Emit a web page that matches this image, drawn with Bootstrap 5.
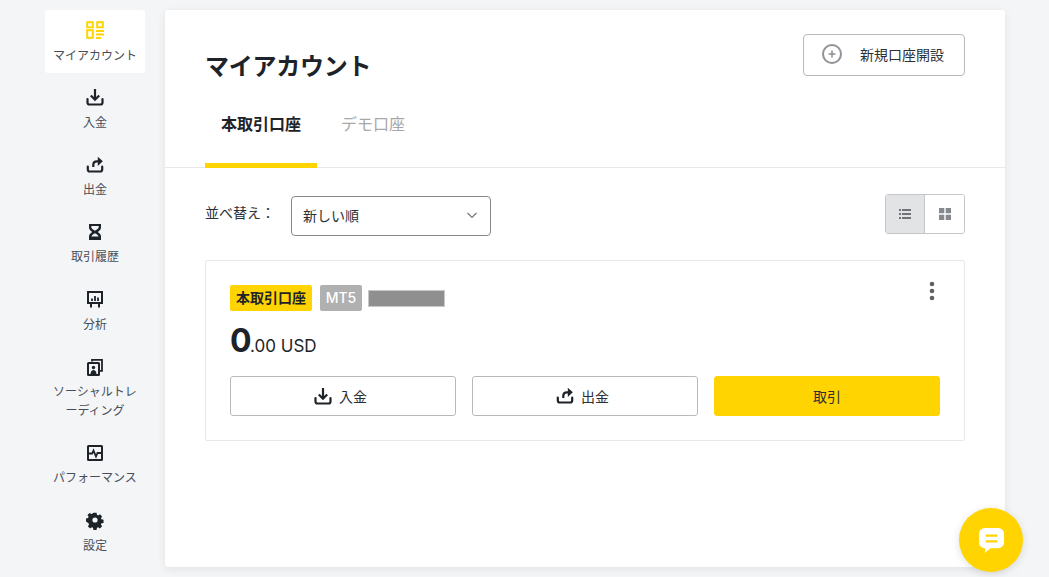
<!DOCTYPE html>
<html lang="ja">
<head>
<meta charset="utf-8">
<title>マイアカウント</title>
<link href="https://cdn.jsdelivr.net/npm/bootstrap@5.3.0/dist/css/bootstrap.min.css" rel="stylesheet">
<style>
html,body{height:577px;overflow:hidden}
body{background:#f3f5f7;font-family:Inter,"Noto Sans CJK JP",sans-serif;color:#2b2f36;padding:10px 44px 10px 45px}
.shell{gap:20px;height:557px}
.side{width:100px;flex:none;gap:4px}
.side-item{display:block;padding:10px 7px 8.83px;text-align:center;font-size:12px;line-height:19px;color:#474d57;text-decoration:none;border-radius:3px}
.side-item.on{background:#fff}
.side-item svg{display:block;margin:0 auto 5.5px;width:20px;height:20px}
.panel{width:840px;flex:none;background:#fff;border-radius:3px;box-shadow:0 2px 8px rgba(0,0,0,.08)}
.head{padding:24px 40px 0;border-bottom:1px solid #e6e8ea;height:158px}
.page-title{font-size:24px;font-weight:700;line-height:32px;margin:17px 0 0;color:#1e2329;letter-spacing:-.25px}
.new-btn{width:162px;height:42px;border:1px solid #b7b9bc;border-radius:4px;background:#fff;font-size:14px;color:#2b2f36;padding:0 20px 2px 18px}
.tabs-row{position:absolute;left:40px;bottom:-1px}
.head-wrap{position:relative}
.tab-item{font-size:16px;line-height:24px;padding:0 16px 27px;color:#a8a8a8;border-bottom:5px solid transparent;margin-right:8px}
.tab-item.on{font-weight:700;color:#1e2329;border-bottom-color:#ffd400}
.body-area{padding:26px 40px 0}
.sort-label{font-size:14px;line-height:20px;color:#2b2f36;width:86px;margin-top:9px}
.sort-box{width:200px;height:40px;border:1px solid #85888d;border-radius:4px;font-size:14px;padding:0 11px 2px;margin-top:2px;color:#2b2f36}
.view-switch{width:80px;height:40px;border:1px solid #c4c6c9;border-radius:3px;overflow:hidden}
.view-cell{width:50%;background:#fff}
.view-cell.on{background:#e2e3e5;border-right:1px solid #c4c6c9}
.acct{border:1px solid #e6e8ea;border-radius:2px;padding:24px;margin-top:24px;height:181px;position:relative}
.tag-real{background:#ffd400;color:#1e2329;font-weight:700;font-size:14px;line-height:26px;padding:0 6px;border-radius:2px;width:82px;text-align:center}
.tag-mt{background:#b0b0b0;color:#fff;font-weight:500;font-size:14px;line-height:26px;border-radius:2px;width:42px;text-align:center;margin-left:8px}
.tag-mask{width:77px;height:17px;background:#8f8f8f;border:1px solid #c8c8c8;margin-left:6px}
.dots{position:absolute;right:29px;top:20px;width:6px;height:20px}
.amount{margin-top:8px;line-height:44px;height:44px;color:#1e2329;font-size:17px}
.amount b{font-size:32px;font-weight:700;letter-spacing:-1.5px}
.acts{gap:16px;margin-top:13px}
.act{flex:0 0 226px;height:40px;border:1px solid #b7b9bc;border-radius:3px;background:#fff;font-size:14px;color:#2b2f36;gap:6px;padding:0 6px 0 0}
.act svg{width:20px;height:20px}
.act.main{background:#ffd400;border-color:#ffd400;padding:0}
.chat{position:absolute;left:959px;top:508px;width:64px;height:64px;border-radius:50%;background:#ffd400;box-shadow:0 2px 8px rgba(0,0,0,.12)}
</style>
</head>
<body>
<div class="d-flex shell">
  <nav class="side d-flex flex-column">
    <a class="side-item on" href="#"><svg viewBox="0 0 20 20" fill="none" stroke="#ffd400"><rect x="2.2" y="2.2" width="5.6" height="5.1" stroke-width="2"/><rect x="12.2" y="2.2" width="5.6" height="5.1" stroke-width="2"/><rect x="2.2" y="10.2" width="5.6" height="7.6" stroke-width="2"/><path d="M11 11h8M11 14.5h8M11 18h5" stroke-width="1.8"/></svg>マイアカウント</a>
    <a class="side-item" href="#"><svg viewBox="0 0 20 20" fill="none" stroke="#1e2329"><path d="M10 2v10M5.800 8.500 10 12.700l4.200-4.200" stroke-width="2.200"/><path d="M2.500 12v3.500a2 2 0 0 0 2 2h11a2 2 0 0 0 2-2V12" stroke-linecap="round" stroke-width="2.200"/></svg>入金</a>
    <a class="side-item" href="#"><svg viewBox="0 0 20 20" fill="none" stroke="#1e2329"><path d="M8.300 12V9.500A3.500 3.500 0 0 1 11.800 6.300h2.500" stroke-width="2.200"/><path d="m12.800 1.700 5 4.600-5 4.600z" fill="#1e2329" stroke="none"/><path d="M2.800 11.500v3a2 2 0 0 0 2 2h10.400a2 2 0 0 0 2-2v-3" stroke-linecap="round" stroke-width="2.200"/></svg>出金</a>
    <a class="side-item" href="#"><svg viewBox="0 0 20 20"><path fill="#1e2329" fill-rule="evenodd" d="M4 2h12v3.500c0 2-1.500 3.300-3.200 4.500 1.700 1.200 3.200 2.500 3.200 4.500V18H4v-3.500C4 12.500 5.500 11.200 7.200 10 5.500 8.800 4 7.500 4 5.500V2zm2.300 2v1.300c0 1 1.500 2.300 3.700 3.500 2.200-1.200 3.700-2.500 3.700-3.500V4H6.300zM10 11.300c-2 1.100-3.300 2.100-3.600 3.200h7.200c-.3-1.100-1.600-2.100-3.600-3.200z"/></svg>取引履歴</a>
    <a class="side-item" href="#"><svg viewBox="0 0 20 20" fill="none" stroke="#1e2329"><rect x="3" y="3" width="14" height="11" stroke-width="2"/><path d="M6 15v3.500M14 15v3.500" stroke-width="2"/><path d="M7 12V9.500M10 12V7M13 12V8.500" stroke-width="1.800"/></svg>分析</a>
    <a class="side-item" href="#"><svg viewBox="0 0 20 20" fill="none" stroke="#1e2329" stroke-width="2"><path d="M7 4.500V2.800h10v11h-2" stroke-width="1.800"/><rect x="3" y="6" width="11" height="12" rx=".5"/><circle cx="8.500" cy="10.500" r="1.700" fill="#1e2329" stroke="none"/><path d="M5.500 17c.3-3 1.500-4 3-4s2.700 1 3 4z" fill="#1e2329" stroke="none"/></svg>ソーシャルトレーディング</a>
    <a class="side-item" href="#"><svg viewBox="0 0 20 20" fill="none" stroke="#1e2329"><rect x="3" y="3" width="14" height="14" rx=".5" stroke-width="2"/><path d="M4 10.500h3.200l1.300-3 2.500 6 1.500-3.500h3.500" stroke-width="1.800"/></svg>パフォーマンス</a>
    <a class="side-item" href="#"><svg viewBox="0 0 20 20"><path fill="#1e2329" fill-rule="evenodd" d="M8.300 2h3.400l.5 2.300 1.300.6 2-1.300 2.400 2.400-1.300 2 .6 1.300 2.300.5v3.400l-2.300.5-.6 1.300 1.300 2-2.400 2.400-2-1.300-1.300.6-.5 2.300H8.300l-.5-2.300-1.300-.6-2 1.300-2.400-2.400 1.300-2-.6-1.300L0 11.700V8.300l2.300-.5.6-1.300-1.300-2L4 2.100l2 1.300 1.300-.6z" transform="translate(1 1) scale(.9)"/><circle cx="10" cy="10" r="2.600" fill="#f3f5f7"/></svg>設定</a>
  </nav>
  <main class="panel">
    <div class="head head-wrap">
      <div class="d-flex justify-content-between align-items-start">
        <h1 class="page-title">マイアカウント</h1>
        <button type="button" class="new-btn d-flex align-items-center justify-content-between">
          <svg width="20" height="20" viewBox="0 0 20 20" fill="none" stroke="#8f9296" stroke-width="2"><circle cx="10" cy="10" r="9"/><path d="M6.500 10h7M10 6.500v7" stroke-width="1.600"/></svg>
          <span>新規口座開設</span>
        </button>
      </div>
      <div class="tabs-row d-flex">
        <div class="tab-item on">本取引口座</div>
        <div class="tab-item">デモ口座</div>
      </div>
    </div>
    <div class="body-area">
      <div class="d-flex justify-content-between">
        <div class="d-flex">
          <div class="sort-label">並べ替え：</div>
          <div class="sort-box d-flex align-items-center justify-content-between">
            <span>新しい順</span>
            <svg width="14" height="14" viewBox="0 0 14 14" fill="none" stroke="#74777c" stroke-width="1.200"><path d="m2.500 5 4.500 4.500L11.500 5"/></svg>
          </div>
        </div>
        <div class="view-switch d-flex">
          <div class="view-cell on d-flex align-items-center justify-content-center">
            <svg width="12" height="12" viewBox="0 0 12 12" fill="#6f7276"><path d="M0 1h2v2H0zM3 1h9v2H3zM0 5h2v2H0zM3 5h9v2H3zM0 9h2v2H0zM3 9h9v2H3z"/></svg>
          </div>
          <div class="view-cell d-flex align-items-center justify-content-center">
            <svg width="12" height="12" viewBox="0 0 12 12" fill="#85888c"><path d="M0 0h5.300v5.300H0zM6.700 0H12v5.300H6.700zM0 6.700h5.300V12H0zM6.700 6.700H12V12H6.700z"/></svg>
          </div>
        </div>
      </div>
      <section class="acct">
        <div class="d-flex align-items-center">
          <span class="tag-real">本取引口座</span>
          <span class="tag-mt">MT5</span>
          <span class="tag-mask"></span>
        </div>
        <svg class="dots" viewBox="0 0 6 20" fill="#5e6166"><circle cx="3" cy="3" r="2.300"/><circle cx="3" cy="10" r="2.300"/><circle cx="3" cy="17" r="2.300"/></svg>
        <div class="amount"><b>0</b>.00 USD</div>
        <div class="acts d-flex">
          <button type="button" class="act d-flex align-items-center justify-content-center">
            <svg viewBox="0 0 20 20" fill="none" stroke="#1e2329"><path d="M10 2v10M5.800 8.500 10 12.700l4.200-4.200" stroke-width="2.200"/><path d="M2.500 12v3.500a2 2 0 0 0 2 2h11a2 2 0 0 0 2-2V12" stroke-linecap="round" stroke-width="2.200"/></svg>入金
          </button>
          <button type="button" class="act d-flex align-items-center justify-content-center">
            <svg viewBox="0 0 20 20" fill="none" stroke="#1e2329"><path d="M8.300 12V9.500A3.500 3.500 0 0 1 11.800 6.300h2.500" stroke-width="2.200"/><path d="m12.800 1.700 5 4.600-5 4.600z" fill="#1e2329" stroke="none"/><path d="M2.800 11.500v3a2 2 0 0 0 2 2h10.400a2 2 0 0 0 2-2v-3" stroke-linecap="round" stroke-width="2.200"/></svg>出金
          </button>
          <button type="button" class="act main d-flex align-items-center justify-content-center">取引</button>
        </div>
      </section>
    </div>
  </main>
</div>
<div class="chat d-flex align-items-center justify-content-center">
  <svg width="27" height="27" viewBox="0 0 28 28"><path fill="#fff" d="M7 1h14a6 6 0 0 1 6 6v9a6 6 0 0 1-6 6h-8l-6 5 .5-5H7a6 6 0 0 1-6-6V7a6 6 0 0 1 6-6z"/><path d="M8 9h12M8 15h12" stroke="#ffd400" stroke-width="2.400"/></svg>
</div>
<script src="https://cdn.jsdelivr.net/npm/bootstrap@5.3.0/dist/js/bootstrap.bundle.min.js"></script>
</body>
</html>
